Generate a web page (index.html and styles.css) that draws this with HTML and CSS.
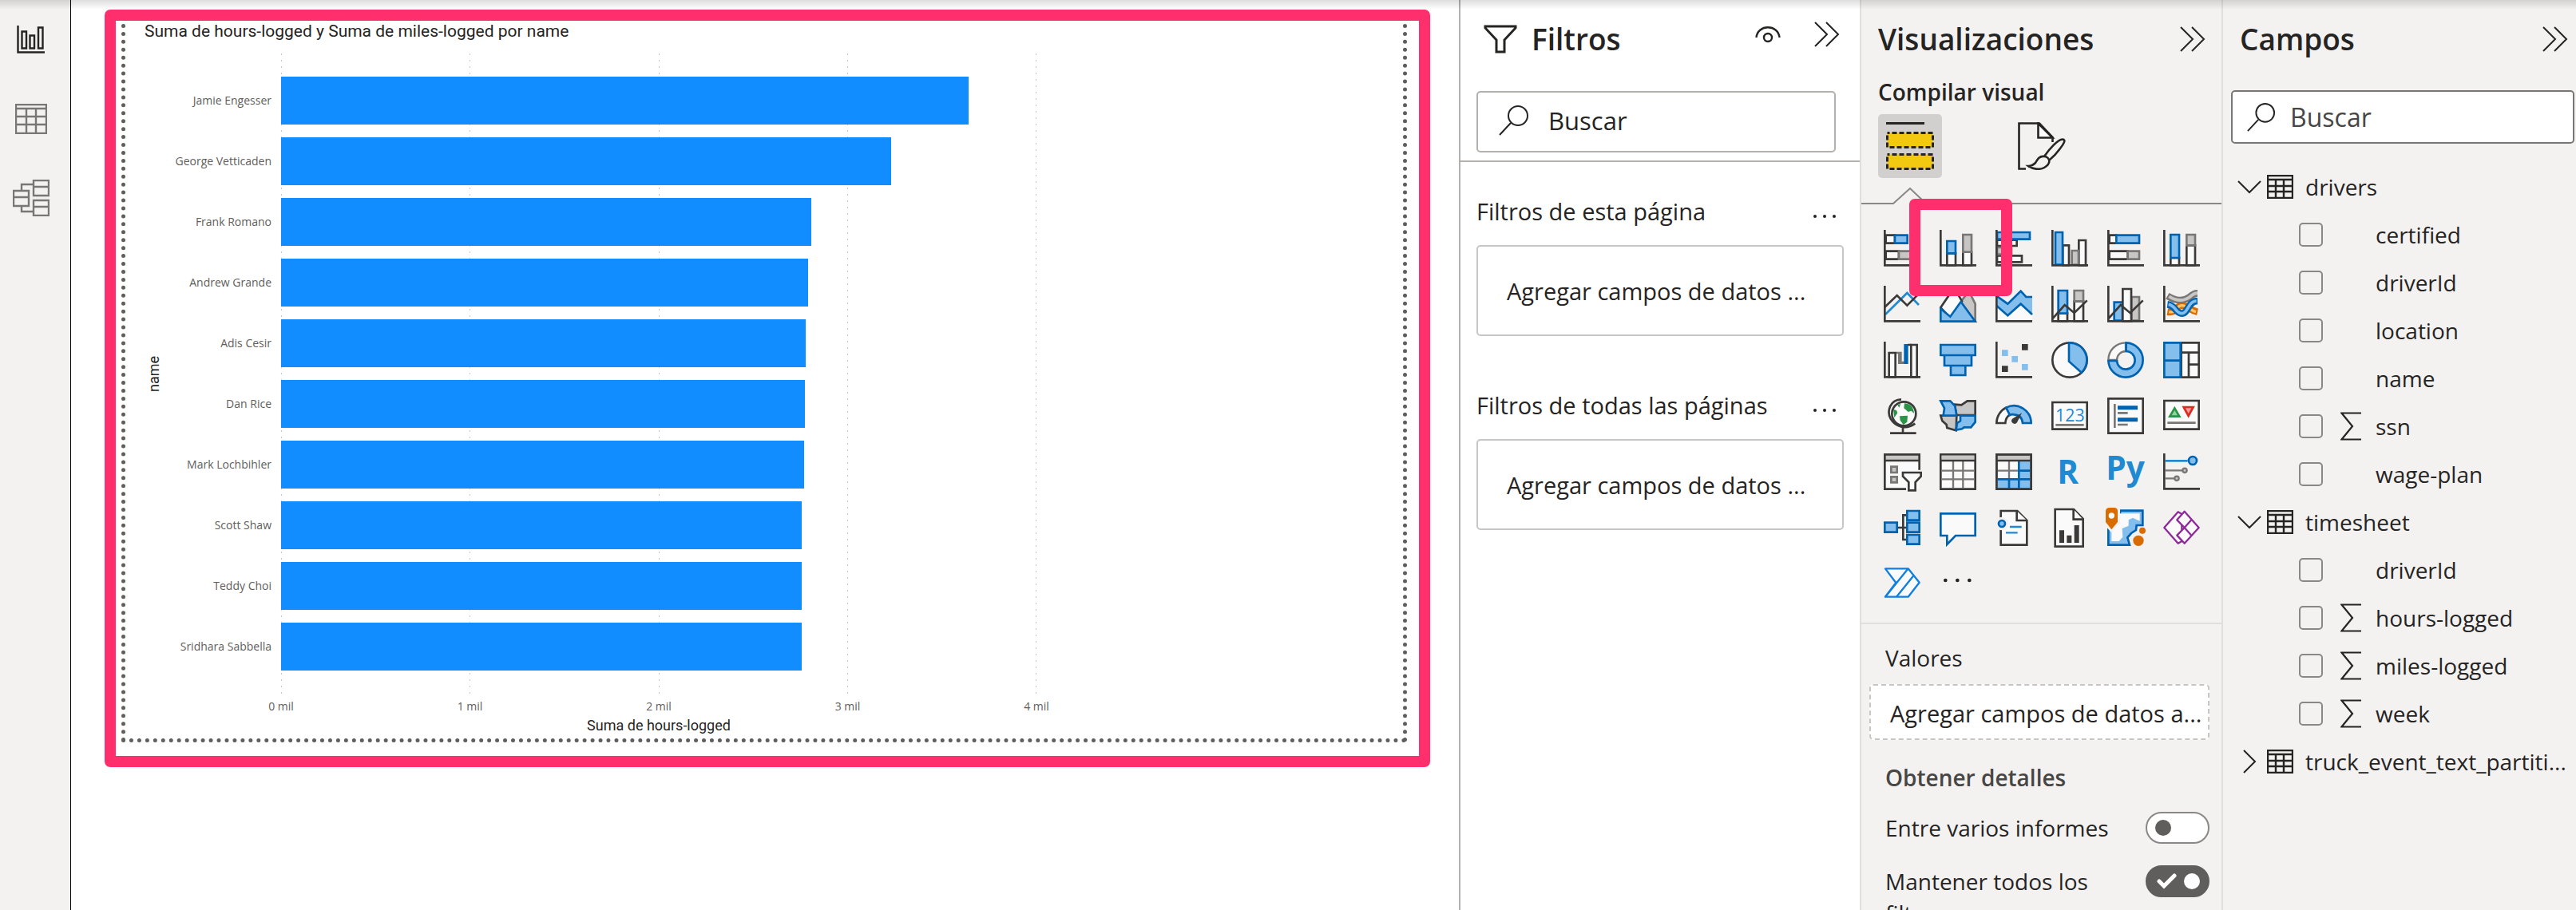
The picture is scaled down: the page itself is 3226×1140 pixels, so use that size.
FILE: index.html
```html
<!DOCTYPE html>
<html lang="es">
<head>
<meta charset="utf-8">
<meta name="viewport" content="width=device-width, initial-scale=1">
<title>Informe</title>
<link rel="stylesheet" href="styles.css">
</head>
<body>
<svg class="defs" aria-hidden="true">
  <symbol id="collapse" viewBox="0 0 32 32"><path d="M1 1L16 16L1 31M15 1L30 16L15 31" fill="none" stroke="#252423" stroke-width="2"/></symbol>
  <symbol id="search" viewBox="0 0 38 38"><circle cx="24" cy="13" r="12" fill="none" stroke="#252423" stroke-width="2"/><path d="M15 22L1 37" stroke="#252423" stroke-width="2"/></symbol>
  <symbol id="dots" viewBox="0 0 28 6"><g fill="#252423"><circle cx="2" cy="3" r="2"/><circle cx="14" cy="3" r="2"/><circle cx="26" cy="3" r="2"/></g></symbol>
  <symbol id="table" viewBox="0 0 33 30"><path d="M1 1H32V29H1ZM1 6H32M1 14H32M1 21H32M11 6V29M21 6V29" fill="none" stroke="#252423" stroke-width="2.4"/></symbol>
  <symbol id="sigma" viewBox="0 0 26 36"><path d="M26 1.5H1.5L15 18L1.5 34.500H26" fill="none" stroke="#252423" stroke-width="2.2"/></symbol>
</svg>
<div class="app">
  <nav class="views" aria-label="Vistas">
    <button class="view" type="button" aria-label="Informe"><svg width="36" height="36" viewBox="0 0 36 36" fill="none" stroke="#252423" stroke-width="2.400"><path d="M1.500 0V33.500H35"/><path d="M6.500 7.500H12V28.500H6.500ZM16.500 12.500H22V28.500H16.500ZM27 2.500H32.500V28.500H27Z"/></svg></button>
    <button class="view" type="button" aria-label="Datos"><svg width="40" height="38" viewBox="0 0 40 38" fill="none" stroke="#797775" stroke-width="2.400"><path d="M1 1H39V37H1ZM1 6H39M1 16H39M1 26H39M14 6V37M26 6V37"/></svg></button>
    <button class="view" type="button" aria-label="Modelo"><svg width="46" height="46" viewBox="0 0 46 46" fill="none" stroke="#797775" stroke-width="2.400"><path d="M1 14H20V33H1ZM1 22H20M26 1H45V20H26ZM26 9H45M26 26H45V45H26ZM26 34H45M11 14V6H26M11 33V40H26"/></svg></button>
  </nav>

  <main class="report">
    <section class="highlight chart-highlight">
      <figure class="visual">
        <figcaption class="visual-title">Suma de hours-logged y Suma de miles-logged por name</figcaption>
        <div class="chart">
          <div class="y-title">name</div>
          <ol class="categories">
            <li>Jamie Engesser</li><li>George Vetticaden</li><li>Frank Romano</li><li>Andrew Grande</li><li>Adis Cesir</li>
            <li>Dan Rice</li><li>Mark Lochbihler</li><li>Scott Shaw</li><li>Teddy Choi</li><li>Sridhara Sabbella</li>
          </ol>
          <div class="plot">
            <div class="gridlines"><i></i><i></i><i></i><i></i><i></i></div>
            <div class="bar" style="width:91%"></div>
            <div class="bar" style="width:80.8%"></div>
            <div class="bar" style="width:70.2%"></div>
            <div class="bar" style="width:69.8%"></div>
            <div class="bar" style="width:69.5%"></div>
            <div class="bar" style="width:69.3%"></div>
            <div class="bar" style="width:69.2%"></div>
            <div class="bar" style="width:68.9%"></div>
            <div class="bar" style="width:68.9%"></div>
            <div class="bar" style="width:68.9%"></div>
          </div>
          <div class="ticks"><span>0 mil</span><span>1 mil</span><span>2 mil</span><span>3 mil</span><span>4 mil</span></div>
          <div class="x-title">Suma de hours-logged</div>
        </div>
      </figure>
    </section>
  </main>

  <aside class="pane filters">
    <header class="filters-head">
      <svg width="42" height="36" viewBox="0 0 42 36" fill="none" stroke="#252423" stroke-width="3"><path d="M2 2H40V4L26 19V34H16V19L2 4Z"/></svg>
      <h2>Filtros</h2>
      <button class="icon-btn" type="button" aria-label="Mostrar filtros"><svg width="32" height="21" viewBox="0 0 32 21" fill="none" stroke="#252423" stroke-width="2.400"><path d="M1.500 14C3 -3 29 -3 30.500 14"/><circle cx="16" cy="14" r="5"/></svg></button>
      <button class="icon-btn" type="button" aria-label="Contraer filtros"><svg width="32" height="32"><use href="#collapse"/></svg></button>
    </header>
    <div class="filters-search">
      <label class="search"><svg width="38" height="38"><use href="#search"/></svg><input type="search" placeholder="Buscar" aria-label="Buscar filtros"></label>
    </div>
    <section class="filter-group">
      <div class="filter-label"><h3>Filtros de esta página</h3><button class="icon-btn" type="button" aria-label="Más opciones"><svg width="28" height="6"><use href="#dots"/></svg></button></div>
      <div class="filter-well">Agregar campos de datos ...</div>
    </section>
    <section class="filter-group">
      <div class="filter-label"><h3>Filtros de todas las páginas</h3><button class="icon-btn" type="button" aria-label="Más opciones"><svg width="28" height="6"><use href="#dots"/></svg></button></div>
      <div class="filter-well">Agregar campos de datos ...</div>
    </section>
  </aside>

  <aside class="pane visualizations">
    <header class="pane-head"><h2>Visualizaciones</h2><button class="icon-btn" type="button" aria-label="Contraer visualizaciones"><svg width="32" height="32"><use href="#collapse"/></svg></button></header>
    <h3 class="build-title">Compilar visual</h3>
    <div class="modes">
      <button class="mode active" type="button" aria-label="Compilar visual"><svg width="60" height="60" viewBox="0 0 60 60"><path d="M0 1.500H48" stroke="#252423" stroke-width="3"/><g fill="#f2c811" stroke="#252423" stroke-width="3"><path stroke-dasharray="6 3" stroke-dashoffset="3" d="M1.500 13.500H58.500V31.500H1.500Z"/><path stroke-dasharray="6 3" stroke-dashoffset="3" d="M1.500 40.500H58.500V58.500H1.500Z"/></g></svg></button>
      <button class="mode" type="button" aria-label="Dar formato"><svg width="60" height="60" viewBox="0 0 60 60" fill="none" stroke="#252423" stroke-width="2.600"><path d="M10 58.500H1.500V1.500H27L43.500 19V25"/><path fill="#fff" d="M25.500 1.500V19.500H43.500Z"/><path d="M33 43C40 33 50 22 56 21.500C61 21.500 57 28 53 33C48 40 44 44 39 48M33 43C26 42 24 48 22 51C19 54 17 55 13 55C18 59 28 60 33 57C38 54 40 50 39 47C38 45 36 43 33 43Z"/></svg></button>
    </div>
    <svg class="notch" viewBox="0 0 451 22" width="451" height="22" preserveAspectRatio="none"><path d="M0 20H40L61 1L81 20H451" fill="none" stroke="#8a8886" stroke-width="2"/></svg>

    <div class="gallery">
      <button type="button" aria-label="Barras apiladas"><svg viewBox="0 0 138 138"><path class="d" d="M8 20H42V50H8ZM8 80H57V110H8Z"/><path class="b" d="M42 20H89V50H42Z"/><path class="g" d="M57 80H115V110H57Z"/><path class="l" d="M4 0V133H138"/></svg></button>
      <button type="button" class="picked" aria-label="Columnas apiladas"><svg viewBox="0 0 138 138"><path class="d" d="M28 88H60V133H28ZM88 83H120V133H88Z"/><path class="b" d="M28 42H60V88H28Z"/><path class="g" d="M88 18H120V83H88Z"/><path class="l" d="M4 0V133H138"/></svg><span class="highlight pick-highlight"></span></button>
      <button type="button" aria-label="Barras agrupadas"><svg viewBox="0 0 138 138"><path class="d" d="M6 38H80V60H6ZM6 97H99V121H6Z"/><path class="g" d="M6 66H60V92H6Z"/><path class="b" d="M6 9H129V35H6Z"/><path class="l" d="M4 0V133H138"/></svg></button>
      <button type="button" aria-label="Columnas agrupadas"><svg viewBox="0 0 138 138"><path class="d" d="M43 58H66V133H43ZM103 39H129V133H103Z"/><path class="g" d="M77 78H102V131H77Z"/><path class="b" d="M15 9H42V131H15Z"/><path class="l" d="M4 0V133H138"/></svg></button>
      <button type="button" aria-label="Barras 100 % apiladas"><svg viewBox="0 0 138 138"><path class="d" d="M8 20H34V50H8ZM8 80H77V110H8Z"/><path class="b" d="M34 20H120V50H34Z"/><path class="g" d="M77 80H120V110H77Z"/><path class="l" d="M4 0V133H138"/></svg></button>
      <button type="button" aria-label="Columnas 100 % apiladas"><svg viewBox="0 0 138 138"><path class="d" d="M28 105H60V133H28ZM88 58H120V133H88Z"/><path class="b" d="M28 18H60V105H28Z"/><path class="g" d="M88 18H120V58H88Z"/><path class="l" d="M4 0V133H138"/></svg></button>

      <button type="button" aria-label="Líneas"><svg viewBox="0 0 138 138"><path class="c" d="M6 108L88 27L132 72"/><path class="l" d="M4 80L50 36L88 74L130 32"/><path class="l" d="M4 0V133H138"/></svg></button>
      <button type="button" aria-label="Áreas"><svg viewBox="0 0 138 138"><path class="g" d="M72 70L110 20L134 68V133H100Z"/><path class="d" d="M4 82L46 20H62L84 58L40 120Z"/><path class="b" d="M4 86L40 116L80 60L134 134H4Z"/></svg></button>
      <button type="button" aria-label="Áreas apiladas"><svg viewBox="0 0 138 138"><path fill="#fafafa" d="M4 75L46 112L95 68L138 108V133H4Z"/><path fill="#83beec" d="M4 38L46 68L95 20L115 42H138V108L95 68L46 112L4 75Z"/><path class="o" d="M4 38L46 68L95 20L115 42H138M4 75L46 112L95 68L138 108"/><path class="l" d="M4 0V133H138"/></svg></button>
      <button type="button" aria-label="Líneas y columnas apiladas"><svg viewBox="0 0 138 138"><path class="d" d="M26 104H60V133H26ZM86 58H120V133H86Z"/><path class="b" d="M26 18H60V104H26Z"/><path class="g" d="M86 18H120V58H86Z"/><path class="l" d="M4 0V133H138M4 124L50 72L86 102L134 55"/></svg></button>
      <button type="button" aria-label="Líneas y columnas agrupadas"><svg viewBox="0 0 138 138"><path class="b" d="M26 62H57V131H26Z"/><path class="g" d="M91 42H120V131H91Z"/><path class="d" d="M58 12H90V133H58Z"/><path class="l" d="M4 0V133H138M4 124L50 72L86 102L134 55"/></svg></button>
      <button type="button" aria-label="Cinta"><svg viewBox="0 0 138 138" fill="none"><path stroke="#d86b01" stroke-width="26" d="M16 98C50 104 50 74 70 74S100 92 129 98"/><path stroke="#ffc56b" stroke-width="10" d="M22 98C50 104 50 74 70 74S100 92 123 98"/><path stroke="#797775" stroke-width="26" d="M16 38C50 58 75 60 100 42Q115 28 129 28"/><path stroke="#c8c6c4" stroke-width="12" d="M22 40C50 58 75 60 100 42Q115 28 129 28"/><path stroke="#0063b1" stroke-width="26" d="M16 70C48 74 46 104 70 104S92 58 129 57"/><path stroke="#83beec" stroke-width="11" d="M20 70C48 74 46 104 70 104S92 58 125 57"/><path class="l" d="M4 0V133H138"/></svg></button>

      <button type="button" aria-label="Cascada"><svg viewBox="0 0 138 138"><path class="d" d="M20 42H44V133H20ZM103 12H125V133H103Z"/><path fill="#797775" d="M48 38H68V74H78V84H54V46H48Z"/><path fill="#0063b1" d="M76 9H92V84H76Z"/><path class="l" d="M90 12H104M4 0V133H138"/></svg></button>
      <button type="button" aria-label="Embudo"><svg viewBox="0 0 138 138"><path class="b" d="M4 12H134V51H4ZM18 51H120V90H18ZM42 90H97V126H42Z"/></svg></button>
      <button type="button" aria-label="Dispersión"><svg viewBox="0 0 138 138"><path fill="#83beec" d="M24 31H47V54H24ZM61 54H84V77H61ZM99 84H122V107H99Z"/><path fill="#3b3a39" d="M99 9H122V32H99ZM24 91H47V114H24Z"/><path class="l" d="M4 0V133H138"/></svg></button>
      <button type="button" aria-label="Circular"><svg viewBox="0 0 138 138"><circle class="d" cx="69" cy="69" r="65"/><path class="b" d="M66 4A65 65 0 0 1 113 116L66 74Z"/></svg></button>
      <button type="button" aria-label="Anillo"><svg viewBox="0 0 138 138"><path fill="#fafafa" stroke="#797775" stroke-width="7" d="M4 69A65 65 0 0 1 69 4V36A33 33 0 0 0 36 69Z"/><path class="b" d="M71 4A65 65 0 1 1 4 72H36A34 34 0 1 0 71 36Z"/></svg></button>
      <button type="button" aria-label="Treemap"><svg viewBox="0 0 138 138"><path class="d" d="M68 4H134V41H68ZM68 41H96V134H68ZM96 41H134V86H96ZM96 86H134V134H96Z"/><path class="b" d="M4 4H65V71H4ZM4 71H65V134H4Z"/></svg></button>

      <button type="button" aria-label="Mapa"><svg viewBox="0 0 138 138"><circle class="d" cx="76" cy="61" r="45"/><path fill="#2b9348" d="M78 22Q112 24 114 60L104 50L92 54L76 40ZM60 70L90 68L88 92L74 102L62 86ZM36 44L48 48L52 58L40 76ZM52 28L64 24L58 38Z"/><path class="l" d="M66 7C25 8 10 50 26 80C45 112 85 122 118 98M72 110V134M24 134H122"/></svg></button>
      <button type="button" aria-label="Mapa coroplético"><svg viewBox="0 0 138 138"><path fill="#c8c6c4" stroke="#3b3a39" stroke-width="8" d="M56 26L82 28L104 13H134V66H64ZM4 68H64L62 124L28 114L26 102L10 88Z"/><path class="b" d="M4 13H40L58 32L64 68H14L18 40ZM78 68H134V92L118 112H92L84 118L62 122L66 96L78 88Z"/></svg></button>
      <button type="button" aria-label="Medidor"><svg viewBox="0 0 138 138"><path class="d" d="M4 96A65 65 0 0 1 40 38L54 64Q38 74 37 96Z"/><path class="b" d="M40 38A65 65 0 0 1 134 96H102Q100 66 69 64Q60 62 54 66Z"/><path fill="#3b3a39" d="M99 58L81 94A10 10 0 1 1 63 80Z"/></svg></button>
      <button type="button" aria-label="Tarjeta"><svg viewBox="0 0 138 138"><path class="d" d="M4 18H134V119H4Z"/><text x="70" y="90" class="num">123</text><path stroke="#797775" stroke-width="8" d="M16 103H122"/></svg></button>
      <button type="button" aria-label="Tarjeta de varias filas"><svg viewBox="0 0 138 138"><path class="d" d="M4 4H134V134H4Z"/><path stroke="#797775" stroke-width="8" d="M28 24V114M39 58H77M39 102H77"/><path stroke="#0063b1" stroke-width="15" d="M39 38H114M39 83H114"/></svg></button>
      <button type="button" aria-label="KPI"><svg viewBox="0 0 138 138"><path class="d" d="M4 12H134V119H4Z"/><path fill="#92d3a0" stroke="#2b9348" stroke-width="8" d="M25 71L43 40L61 71Z"/><path fill="#ff9a9a" stroke="#d92c20" stroke-width="8" d="M77 36H113L95 69Z"/><path stroke="#797775" stroke-width="8" d="M16 95H122"/></svg></button>

      <button type="button" aria-label="Segmentación"><svg viewBox="0 0 138 138"><path fill="#fafafa" d="M4 4H134V134H4Z"/><path fill="#c8c6c4" d="M4 4H134V26H4Z"/><path class="l" d="M134 62V4H4V134H84M4 27H134"/><path class="g" d="M28 50H50V72H28ZM28 88H50V109H28Z"/><path class="d" d="M72 72H140V86L119 108V139H94V108L72 86Z"/></svg></button>
      <button type="button" aria-label="Tabla"><svg viewBox="0 0 138 138"><path class="d" d="M4 4H134V134H4Z"/><path fill="#c8c6c4" d="M8 8H130V23H8Z"/><path class="q" d="M8 65H130M8 97H130M51 30V130M88 30V130"/><path class="l" d="M4 27H134"/></svg></button>
      <button type="button" aria-label="Matriz"><svg viewBox="0 0 138 138"><path class="d" d="M4 4H134V134H4Z"/><path fill="#c8c6c4" d="M8 8H130V23H8Z"/><path fill="#83beec" d="M88 30H130V130H8V97H88Z"/><path class="q" d="M8 65H88M51 30V97"/><path class="o" d="M88 30V130M88 65H130M8 97H130M51 97V130"/><path class="l" d="M4 27H134M4 4H134V134H4Z"/></svg></button>
      <button type="button" aria-label="Objeto visual de R"><svg viewBox="0 0 138 138"><text x="62" y="114" class="lang">R</text></svg></button>
      <button type="button" aria-label="Objeto visual de Python"><svg viewBox="0 0 138 138"><text x="68" y="99" class="lang">Py</text></svg></button>
      <button type="button" aria-label="Elementos influyentes"><svg viewBox="0 0 138 138"><path class="c" d="M8 28H92"/><circle class="b" cx="111" cy="27" r="15"/><path class="q" d="M8 64H72M8 94H42"/><g fill="#c8c6c4" stroke="#797775" stroke-width="7"><circle cx="81" cy="64" r="8"/><circle cx="51" cy="94" r="8"/></g><path class="l" d="M4 0V133H138"/></svg></button>

      <button type="button" aria-label="Árbol de descomposición"><svg viewBox="0 0 138 138"><path class="l" d="M54 69H86M86 22H73V114H86"/><path class="b" d="M4 50H50V86H4ZM88 6H134V41H88ZM88 50H134V86H88ZM88 96H134V131H88Z"/></svg></button>
      <button type="button" aria-label="Preguntas y respuestas"><svg viewBox="0 0 138 138"><path class="w" d="M4 16H134V99H60L28 132V99H4Z"/></svg></button>
      <button type="button" aria-label="Narración inteligente"><svg viewBox="0 0 138 138"><path class="d" d="M20 6H82L118 42V134H20Z"/><path class="d" d="M80 6V42H118"/><circle cx="24" cy="54" r="25" fill="#f3f2f1"/><circle class="b" cx="24" cy="54" r="12"/><path stroke="#1f8ad2" stroke-width="7" d="M54 66H98M39 88H83"/></svg></button>
      <button type="button" aria-label="Informe paginado"><svg viewBox="0 0 138 138"><path class="d" d="M14 0H84L119 36V140H14Z"/><path class="d" d="M83 0V38H119"/><path fill="#3b3a39" d="M30 79H48V126H30ZM58 98H76V126H58ZM86 60H104V126H86Z"/></svg></button>
      <button type="button" aria-label="ArcGIS Maps"><svg viewBox="0 0 138 138"><path class="b" d="M48 5H133V60H110L108 78L90 90L76 106L84 134H4V70L48 40Z"/><path fill="#fafafa" d="M48 16H122V44L96 32L80 40V62L56 72L58 104L44 120H16V88L30 66L48 50Z"/><path fill="#f3f2f1" d="M-10 0H48V50L16 88L-6 64Z"/><path fill="#d86b01" d="M-6 6Q-4 -6 8 -6H26Q38 -6 39 6V48L16 76L-6 48Z"/><circle cx="16" cy="24" r="11" fill="#fafafa"/><circle cx="117" cy="118" r="20" fill="#d86b01"/><circle cx="132" cy="80" r="12" fill="#d86b01"/></svg></button>
      <button type="button" aria-label="Power Apps"><svg viewBox="0 0 138 138"><g fill="#fafafa" stroke="#8f2a9b" stroke-width="7" stroke-linejoin="round"><path d="M56 10L4 69L56 128L70 120V18Z"/><path d="M80 8L134 69L80 128L52 98L80 69L52 40Z"/><path d="M80 69L106 98M80 69L106 40" fill="none"/></g></svg></button>

      <button type="button" aria-label="Power Automate"><svg viewBox="0 0 138 138"><g fill="#fafafa" stroke="#0f7fe0" stroke-width="7" stroke-linejoin="round"><path d="M6 13H92L134 65L92 119H6L46 66Z"/><path fill="none" d="M92 13L6 119M112 40L48 119"/></g></svg></button>
      <button type="button" aria-label="Obtener más objetos visuales"><svg viewBox="0 0 138 138"><g fill="#252423"><circle cx="22" cy="57" r="7"/><circle cx="67" cy="57" r="7"/><circle cx="112" cy="57" r="7"/></g></svg></button>
    </div>

    <section class="wells">
      <h4>Valores</h4>
      <div class="value-well">Agregar campos de datos a...</div>
      <h4 class="drill-title">Obtener detalles</h4>
      <label class="toggle-row"><span>Entre varios informes</span><span class="switch"><input type="checkbox" role="switch"></span></label>
      <label class="toggle-row"><span>Mantener todos los filtros</span><span class="switch"><input type="checkbox" role="switch" checked><svg width="26" height="20" viewBox="0 0 26 20"><path d="M3 10L9 16L22 3" fill="none" stroke="#fff" stroke-width="5" stroke-linecap="round"/></svg></span></label>
    </section>
  </aside>

  <aside class="pane fields">
    <header class="pane-head"><h2>Campos</h2><button class="icon-btn" type="button" aria-label="Contraer campos"><svg width="32" height="32"><use href="#collapse"/></svg></button></header>
    <label class="search field-search"><svg width="36" height="36"><use href="#search"/></svg><input type="search" placeholder="Buscar" aria-label="Buscar campos"></label>
    <div class="tree">
      <button class="node" type="button" aria-expanded="true"><svg class="chev" viewBox="0 0 30 30"><path d="M1 8L15 22L29 8"/></svg><svg width="33" height="30"><use href="#table"/></svg><span>drivers</span></button>
      <label class="field"><input type="checkbox"><i></i><span>certified</span></label>
      <label class="field"><input type="checkbox"><i></i><span>driverId</span></label>
      <label class="field"><input type="checkbox"><i></i><span>location</span></label>
      <label class="field"><input type="checkbox"><i></i><span>name</span></label>
      <label class="field"><input type="checkbox"><i><svg width="26" height="36"><use href="#sigma"/></svg></i><span>ssn</span></label>
      <label class="field"><input type="checkbox"><i></i><span>wage-plan</span></label>
      <button class="node" type="button" aria-expanded="true"><svg class="chev" viewBox="0 0 30 30"><path d="M1 8L15 22L29 8"/></svg><svg width="33" height="30"><use href="#table"/></svg><span>timesheet</span></button>
      <label class="field"><input type="checkbox"><i></i><span>driverId</span></label>
      <label class="field"><input type="checkbox"><i><svg width="26" height="36"><use href="#sigma"/></svg></i><span>hours-logged</span></label>
      <label class="field"><input type="checkbox"><i><svg width="26" height="36"><use href="#sigma"/></svg></i><span>miles-logged</span></label>
      <label class="field"><input type="checkbox"><i><svg width="26" height="36"><use href="#sigma"/></svg></i><span>week</span></label>
      <button class="node" type="button" aria-expanded="false"><svg class="chev" viewBox="0 0 30 30"><path d="M8 1L22 15L8 29"/></svg><svg width="33" height="30"><use href="#table"/></svg><span>truck_event_text_partiti...</span></button>
    </div>
  </aside>
</div>
</body>
</html>
```
FILE: styles.css
```css
* { box-sizing: border-box; }
body {
  margin: 0;
  font-family: "Open Sans", "Noto Sans", sans-serif;
  font-size: 28px;
  line-height: 38px;
  color: #252423;
  background: #fff;
}
h2, h3, h4, figure, ol { margin: 0; padding: 0; font-weight: 400; font-size: inherit; }
button { margin: 0; padding: 0; border: 0; background: none; font: inherit; color: inherit; text-align: left; }
svg { display: block; flex: none; }
.defs { position: absolute; width: 0; height: 0; }

.app {
  display: grid;
  grid-template-columns: 89px minmax(0, 1fr) 502px 455px 442px;
  height: 100vh;
  overflow: hidden;
}
/* soft shadow cast by the ribbon above */
.app::after {
  content: "";
  position: fixed;
  inset: 0 0 auto;
  height: 12px;
  background: linear-gradient(rgba(0, 0, 0, .13), rgba(0, 0, 0, 0));
  pointer-events: none;
}

/* view switcher */
.views { padding-right: 10px; background: #f3f2f1; border-right: 1px solid #000; }
.view { display: grid; place-items: center; width: 100%; height: 99px; }

/* report canvas */
.report { padding: 12px 36px 0 42px; }
.highlight { border: 14px solid #ff2f6e; border-radius: 7px; }
.chart-highlight { padding: 4px 15px 17px 7px; }
.visual {
  border: 5px dotted #605e5c;
  border-top: 0;
  padding-bottom: 7px;
}
.visual-title {
  padding-left: 24px;
  margin-bottom: 19px;
  font: 21px/18px Roboto, sans-serif;
}
.chart {
  display: grid;
  grid-template-columns: 46px 149px minmax(0, 946fr) 459fr;
  grid-template-rows: auto 30px 18px;
  font-size: 14px;
  color: #605e5c;
}
.y-title {
  justify-self: end;
  align-self: center;
  writing-mode: vertical-rl;
  transform: rotate(180deg);
  font: 18px/20px Roboto, sans-serif;
  color: #252423;
}
.categories { list-style: none; padding: 21px 12px 22px 0; text-align: right; line-height: 76px; white-space: nowrap; }
.plot { position: relative; display: flex; flex-direction: column; gap: 16px; padding: 29px 0 30px; }
.bar { position: relative; height: 60px; background: #118dff; }
.gridlines { position: absolute; inset: 0; display: flex; justify-content: space-between; }
.gridlines i { width: 1px; background: repeating-linear-gradient(#c8c6c4 0 2px, transparent 2px 8px); }
.ticks { grid-column: 3; display: flex; justify-content: space-between; line-height: 30px; white-space: nowrap; }
.ticks span { display: flex; justify-content: center; width: 0; }
.x-title { grid-column: 3; text-align: center; font: 18px/18px Roboto, sans-serif; color: #252423; }

/* shared pane parts */
.pane { overflow: hidden; }
.pane h2 { font-size: 37px; font-weight: 600; line-height: 48px; }
.icon-btn { display: grid; place-items: center; }
.search { display: flex; align-items: center; background: #fff; border: 2px solid #b3b0ad; border-radius: 5px; }
.search input {
  flex: 1;
  min-width: 0;
  padding: 0;
  border: 0;
  background: none;
  font: inherit;
  color: inherit;
  outline: 0;
}
.search input::placeholder { color: inherit; opacity: 1; }

/* filters */
.filters { border-left: 2px solid #b3b0ad; font-size: 29px; }
.filters-head { display: flex; align-items: center; padding: 25px 25px 0 29px; height: 73px; }
.filters-head h2 { flex: 1; margin-left: 18px; }
.filters-head .icon-btn { height: 36px; margin-left: 42px; align-self: flex-start; }
.filters-search { padding: 41px 30px 10px 20px; border-bottom: 2px solid #b3b0ad; }
.filters-search .search { height: 77px; padding: 0 0 4px 26px; gap: 24px; font-size: 31px; }
.filter-group { padding: 43px 20px 0; }
.filter-label { display: flex; justify-content: space-between; align-items: center; padding-right: 10px; }
.filter-label .icon-btn { padding-top: 12px; }
.filter-well {
  display: flex;
  align-items: center;
  height: 114px;
  margin: 23px 0 25px;
  padding: 2px 0 0 36px;
  border: 2px solid #c8c6c4;
  border-radius: 5px;
  white-space: nowrap;
}

/* visualizations */
.visualizations { background: #f3f2f1; border-left: 2px solid #e1dfdd; border-right: 2px solid #e1dfdd; }
.pane-head { display: flex; justify-content: space-between; align-items: center; padding: 25px 20px 0 21px; }
.build-title { padding: 23px 21px 0; font-weight: 600; }
.modes { display: flex; gap: 85px; padding: 9px 21px 12px; }
.mode { display: grid; place-items: center; width: 80px; height: 80px; border-radius: 5px; }
.mode.active { background: #d2d0ce; }
.notch { width: 100%; }
.gallery {
  display: grid;
  grid-template-columns: repeat(6, 70px);
  grid-auto-rows: 70px;
  padding: 19px 16px 14px;
}
.gallery button { display: grid; place-items: center; position: relative; }
.gallery svg { width: 46px; height: 46px; overflow: visible; }
.pick-highlight { position: absolute; z-index: 1; width: 129px; height: 122px; left: -26px; top: -27px; }
.d { fill: #fafafa; stroke: #3b3a39; stroke-width: 8; }
.b { fill: #83beec; stroke: #0063b1; stroke-width: 8; }
.w { fill: #fafafa; stroke: #0063b1; stroke-width: 8; }
.g { fill: #c8c6c4; stroke: #797775; stroke-width: 8; }
.l { fill: none; stroke: #3b3a39; stroke-width: 8; }
.c { fill: none; stroke: #1f8ad2; stroke-width: 8; }
.o { fill: none; stroke: #0063b1; stroke-width: 8; }
.q { fill: none; stroke: #797775; stroke-width: 7; }
.num { font-size: 64px; text-anchor: middle; fill: #1f8ad2; }
.lang { font-size: 122px; font-weight: 700; text-anchor: middle; fill: #1f8ad2; }

.wells { border-top: 2px solid #e1dfdd; padding: 23px 15px 0 10px; }
.wells h4 { padding-left: 20px; }
.value-well {
  height: 70px;
  margin-top: 14px;
  padding-left: 24px;
  border: 2px dashed #c8c6c4;
  border-radius: 5px;
  background: #fff;
  font-size: 29px;
  line-height: 70px;
  white-space: nowrap;
}
.wells .drill-title { margin: 28px 0 24px; font-weight: 600; color: #484644; }
.toggle-row { display: flex; justify-content: space-between; align-items: flex-start; gap: 40px; padding-left: 20px; margin-bottom: 27px; line-height: 40px; }
.switch { position: relative; flex: none; width: 80px; height: 40px; }
.switch input {
  appearance: none;
  display: flex;
  align-items: center;
  width: 80px;
  height: 40px;
  margin: 0;
  padding: 0 10px;
  border: 2px solid #8a8886;
  border-radius: 20px;
  background: #fff;
}
.switch input::before { content: ""; width: 20px; height: 20px; border-radius: 50%; background: #605e5c; }
.switch input:checked { justify-content: flex-end; background: #605e5c; border-color: #605e5c; }
.switch input:checked::before { background: #fff; }
.switch svg { position: absolute; left: 14px; top: 10px; }

/* fields */
.fields { background: #f3f2f1; }
.fields .pane-head { padding-right: 10px; }
.field-search { height: 67px; margin: 40px 2px 24px 10px; padding-left: 18px; gap: 18px; border-color: #797775; font-size: 32px; color: #484644; }
.tree { display: flex; flex-direction: column; }
.node, .field { display: flex; align-items: center; height: 60px; white-space: nowrap; }
.node { padding-left: 18px; gap: 15px; }
.chev { width: 30px; height: 30px; margin-right: -8px; fill: none; stroke: #252423; stroke-width: 2; }
.field { padding-left: 95px; }
.field input {
  appearance: none;
  width: 30px;
  height: 30px;
  margin: 0;
  border: 2px solid #8a8886;
  border-radius: 5px;
}
.field i { width: 66px; padding-left: 22px; }
```
